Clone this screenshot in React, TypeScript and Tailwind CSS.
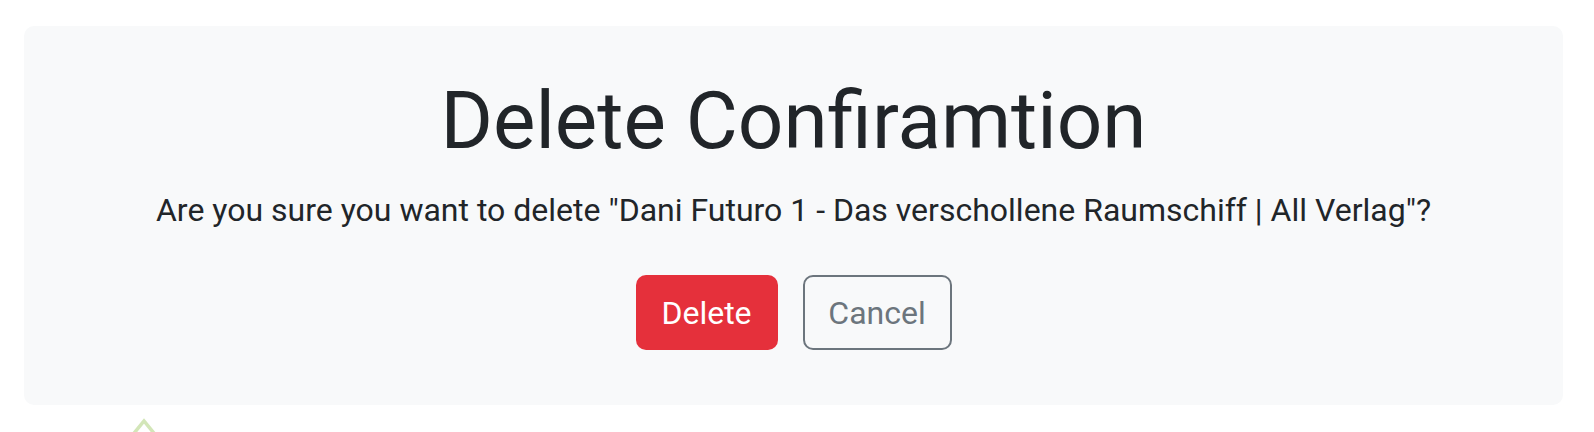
export default function App() {
  return (
    <div className="min-h-[432px] bg-white font-['Roboto',sans-serif] pt-[26px] pl-[24px]">
      <div className="w-[1539px] h-[379px] rounded-[10px] bg-[#f8f9fa] flex flex-col items-center">
        <h1 className="mt-[55px] text-[80px] leading-none font-normal text-[#212529]">Delete Confiramtion</h1>
        <p className="mt-[33px] text-[32px] leading-none text-[#212529]">
          Are you sure you want to delete "Dani Futuro 1 - Das verschollene Raumschiff | All Verlag"?
        </p>
        <div className="mt-[49px] flex gap-[25px]">
          <button className="w-[142px] h-[75px] rounded-[10px] bg-[#e5303b] text-white text-[32px]">Delete</button>
          <button className="w-[149px] h-[75px] rounded-[10px] border-2 border-[#6c757d] text-[#6c757d] text-[32px]">Cancel</button>
        </div>
      </div>
      {/* partially visible green marker below the card */}
      <svg className="ml-[84px] mt-[2px]" width="72" height="30" viewBox="0 0 72 30">
        <defs>
          <radialGradient id="g" cx="50%" cy="90%" r="55%">
            <stop offset="0%" stopColor="#e8f3d6" />
            <stop offset="100%" stopColor="#ffffff" stopOpacity="0" />
          </radialGradient>
        </defs>
        <ellipse cx="36" cy="30" rx="34" ry="24" fill="url(#g)" />
        <path d="M18 36 L36 14 L54 36" fill="none" stroke="#d3e6b8" strokeWidth="3.5" />
      </svg>
    </div>
  );
}
